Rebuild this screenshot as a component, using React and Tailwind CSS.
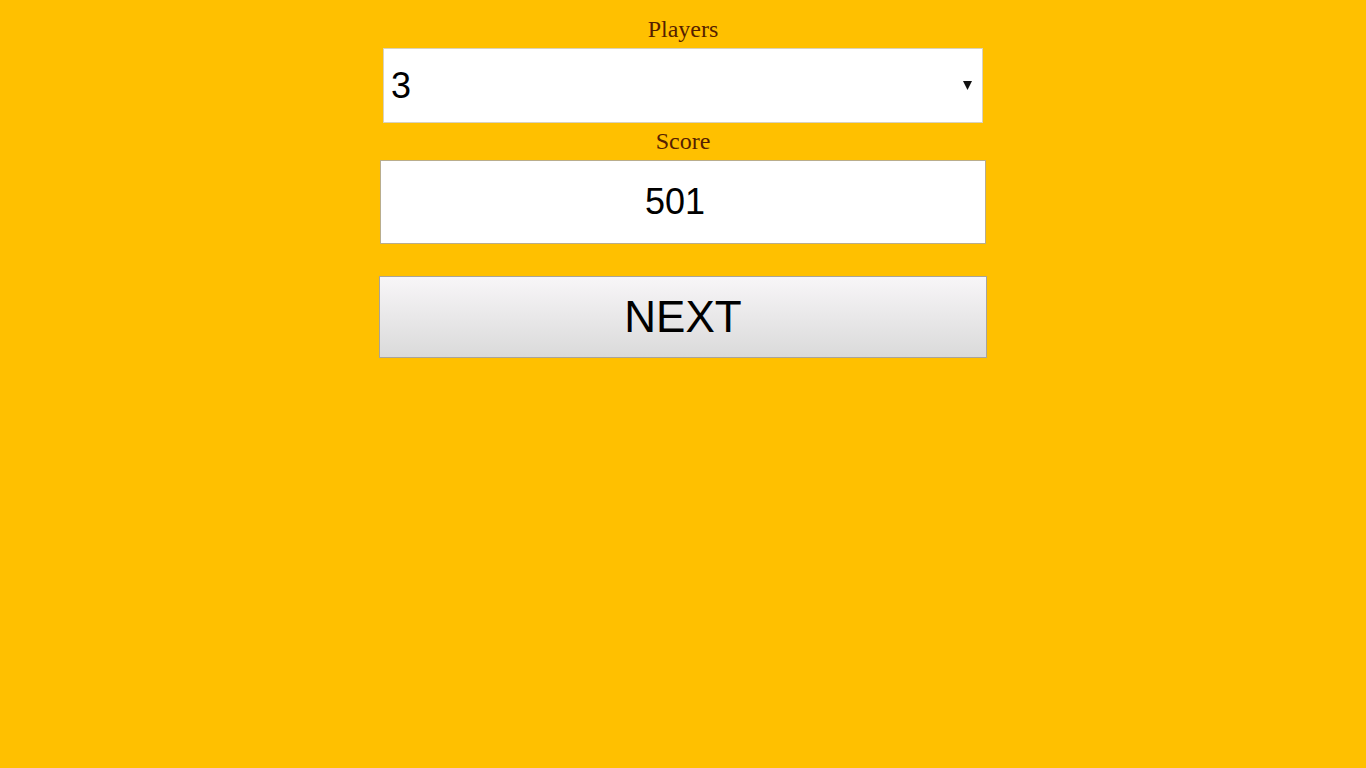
import React from "react";

export default function App() {
  return (
    <div className="min-h-screen w-full bg-[#ffc000] flex flex-col items-center pt-[11px]">
      <div className="leading-[37px] text-[24px] text-[#561f00] font-['Liberation_Serif',serif]">Players</div>
      <div className="relative w-[600px] h-[75px]">
        <select
          defaultValue="3"
          className="appearance-none w-full h-full bg-white border border-[#d9d2bd] pl-[7px] text-[36px] text-black font-['Liberation_Sans',Arial,sans-serif] outline-none"
        >
          <option value="1">1</option>
          <option value="2">2</option>
          <option value="3">3</option>
          <option value="4">4</option>
        </select>
        <svg className="absolute right-[11px] top-[33px] pointer-events-none" width="9" height="9" viewBox="0 0 9 9">
          <path d="M0 0 L9 0 L4.5 9 Z" fill="#111" />
        </svg>
      </div>
      <div className="leading-[37px] text-[24px] text-[#561f00] font-['Liberation_Serif',serif]">Score</div>
      <input
        type="text"
        defaultValue="501"
        className="w-[606px] h-[84px] bg-white border border-[#b9ad8c] text-center pr-[16px] text-[36px] text-black font-['Liberation_Sans',Arial,sans-serif] outline-none"
      />
      <button className="mt-[32px] w-[608px] h-[82px] border border-[#a9a49a] bg-gradient-to-b from-[#f8f6f8] to-[#dadada] text-[44px] text-black font-['Liberation_Sans',Arial,sans-serif]">
        NEXT
      </button>
    </div>
  );
}
